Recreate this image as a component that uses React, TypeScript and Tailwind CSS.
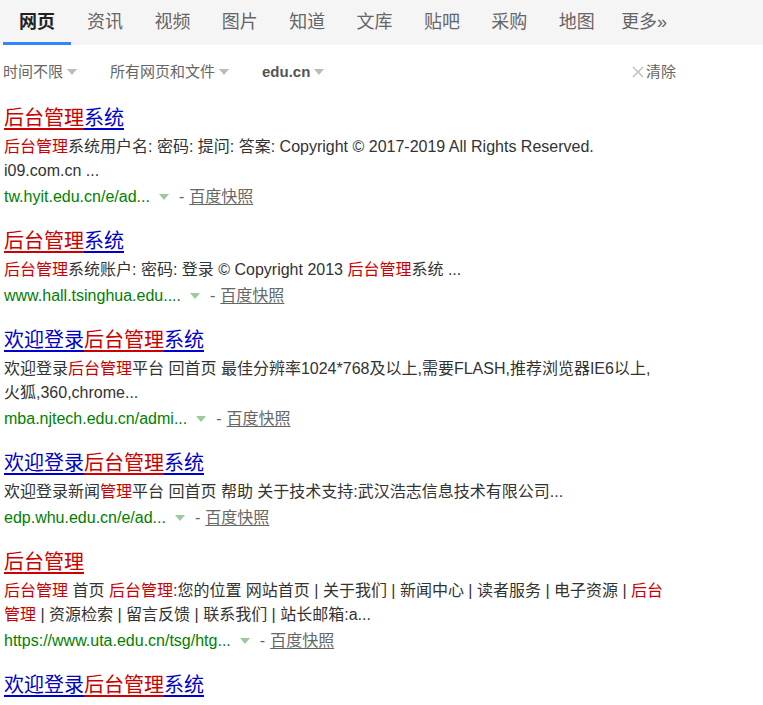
const tabs = ["网页", "资讯", "视频", "图片", "知道", "文库", "贴吧", "采购", "地图", "更多»"]

type Seg = [string, boolean?]

type Result = {
  title: Seg[]
  lines: Seg[][]
  url: string
}

const results: Result[] = [
  {
    title: [["后台管理", true], ["系统"]],
    lines: [
      [["后台管理", true], ["系统用户名: 密码: 提问: 答案: Copyright © 2017-2019 All Rights Reserved."]],
      [["i09.com.cn ..."]],
    ],
    url: "tw.hyit.edu.cn/e/ad...",
  },
  {
    title: [["后台管理", true], ["系统"]],
    lines: [[["后台管理", true], ["系统账户: 密码: 登录 © Copyright 2013 "], ["后台管理", true], ["系统 ..."]]],
    url: "www.hall.tsinghua.edu....",
  },
  {
    title: [["欢迎登录"], ["后台管理", true], ["系统"]],
    lines: [
      [["欢迎登录"], ["后台管理", true], ["平台 回首页 最佳分辨率1024*768及以上,需要FLASH,推荐浏览器IE6以上,"]],
      [["火狐,360,chrome..."]],
    ],
    url: "mba.njtech.edu.cn/admi...",
  },
  {
    title: [["欢迎登录"], ["后台管理", true], ["系统"]],
    lines: [[["欢迎登录新闻"], ["管理", true], ["平台 回首页 帮助 关于技术支持:武汉浩志信息技术有限公司..."]]],
    url: "edp.whu.edu.cn/e/ad...",
  },
  {
    title: [["后台管理", true]],
    lines: [
      [
        ["后台管理", true],
        [" 首页 "],
        ["后台管理", true],
        [":您的位置 网站首页 | 关于我们 | 新闻中心 | 读者服务 | 电子资源 | "],
        ["后台", true],
      ],
      [["管理", true], [" | 资源检索 | 留言反馈 | 联系我们 | 站长邮箱:a..."]],
    ],
    url: "https://www.uta.edu.cn/tsg/htg...",
  },
  {
    title: [["欢迎登录"], ["后台管理", true], ["系统"]],
    lines: [],
    url: "",
  },
]

function Caret({ color }: { color: string }) {
  return (
    <svg width="10" height="6" viewBox="0 0 10 6" className="shrink-0">
      <path d="M0 0 L10 0 L5 6 Z" fill={color} />
    </svg>
  )
}

export default function App() {
  return (
    <div
      className="w-[763px] h-[705px] overflow-hidden bg-white"
      style={{ fontFamily: '"Liberation Sans", Arial, "Noto Sans CJK SC", sans-serif' }}
    >
      {/* tab bar */}
      <div className="h-[45px] bg-[#f5f5f6] flex pl-[3px]">
        {tabs.map((t, i) => (
          <div
            key={t}
            className={
              i === 0
                ? "w-[68px] pl-[16px] h-full flex items-center text-[18px] font-bold text-[#222] border-b-[3px] border-[#3385ff] pt-[3px]"
                : i === tabs.length - 1
                  ? "pl-[11px] h-full flex items-center text-[18px] text-[#666] whitespace-nowrap"
                  : "w-[67.4px] pl-[16px] h-full flex items-center text-[18px] text-[#666] whitespace-nowrap"
            }
          >
            {t}
          </div>
        ))}
      </div>

      {/* filter row */}
      <div className="h-[54px] flex items-center text-[15px] text-[#666] pl-[3px]">
        <span>时间不限</span>
        <span className="ml-[4px] mr-[33px]">
          <Caret color="#bbb" />
        </span>
        <span>所有网页和文件</span>
        <span className="ml-[4px] mr-[33px]">
          <Caret color="#bbb" />
        </span>
        <span className="font-bold text-[#555]">edu.cn</span>
        <span className="ml-[4px]">
          <Caret color="#bbb" />
        </span>
        <span className="ml-auto mr-[87px] flex items-center">
          <svg width="12" height="12" viewBox="0 0 12 12" className="mr-[2px]">
            <path d="M1 1 L11 11 M11 1 L1 11" stroke="#bbb" strokeWidth="1.4" />
          </svg>
          清除
        </span>
      </div>

      {/* results */}
      <div className="mt-[5px] pl-[4px] flex flex-col gap-[17px]">
        {results.map((r, i) => (
          <div key={i}>
            <div className="h-[28px] leading-[28px] text-[20px] whitespace-nowrap">
              {r.title.map(([s, hl], j) => (
                <span
                  key={j}
                  className={
                    hl
                      ? "text-[#c00] underline decoration-[2px] underline-offset-[3px]"
                      : "text-[#00c] underline decoration-[2px] underline-offset-[3px]"
                  }
                >
                  {s}
                </span>
              ))}
            </div>
            {r.lines.length > 0 && (
              <div className="mt-[3px] text-[16px] leading-[24px] text-[#333]">
                {r.lines.map((line, k) => (
                  <div key={k} className="whitespace-pre">
                    {line.map(([s, hl], j) => (
                      <span key={j} className={hl ? "text-[#c00]" : ""}>
                        {s}
                      </span>
                    ))}
                  </div>
                ))}
              </div>
            )}
            {r.url && (
              <div className="h-[27px] flex items-center text-[16px] whitespace-nowrap">
                <span className="text-[#008000]">{r.url}</span>
                <span className="ml-[9px] mr-[10px]">
                  <Caret color="#9c9" />
                </span>
                <span className="text-[#666]">-</span>
                <span className="ml-[5px] text-[#666] underline underline-offset-[2px]">百度快照</span>
              </div>
            )}
          </div>
        ))}
      </div>
    </div>
  )
}
